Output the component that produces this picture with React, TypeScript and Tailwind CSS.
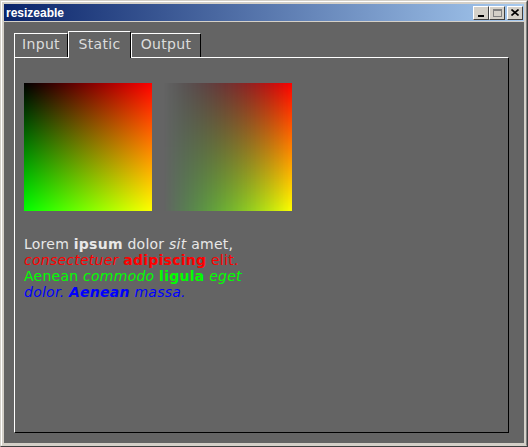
import React from 'react';

const font = { fontFamily: '"DejaVu Sans", sans-serif' };

function TitleButton({ children }: { children: React.ReactNode }) {
  return (
    <div className="w-[16px] h-[14px] bg-[#d4d0c8] border border-t-white border-l-white border-r-[#404040] border-b-[#404040] flex items-center justify-center">
      {children}
    </div>
  );
}

function Tab({ label, width, active }: { label: string; width: string; active?: boolean }) {
  if (active) {
    return (
      <div
        className={`${width} h-[27px] -mb-px relative z-10 bg-[#646464] border-l border-t border-r border-l-white border-t-white border-r-black pt-[4px] text-center text-[14px] leading-[16px] text-[#dcdcdc] tracking-[0.3px]`}
      >
        {label}
      </div>
    );
  }
  return (
    <div
      className={`${width} h-[24px] border-l border-t border-r border-l-white border-t-white border-r-black pt-[2px] text-center text-[14px] leading-[16px] text-[#dcdcdc] tracking-[0.3px]`}
    >
      {label}
    </div>
  );
}

export default function App() {
  return (
    <div className="w-[528px] h-[447px] bg-white">
      <div className="w-[528px] h-[447px] border border-t-[#d4d0c8] border-l-[#d4d0c8] border-r-[#404040] border-b-[#404040]">
        <div className="w-full h-full border border-t-white border-l-white border-r-[#808080] border-b-[#d4d0c8] bg-[#d4d0c8] p-[2px] flex flex-col">
          {/* title bar */}
          <div className="h-[17px] shrink-0 flex items-center justify-between bg-[linear-gradient(to_right,#0a246a,#a6caf0)] pl-[2px] pr-[1px]">
            <span className="text-white font-bold text-[12px] leading-[17px] pt-[1px]" style={{ fontFamily: '"Liberation Sans", Arial, sans-serif' }}>
              resizeable
            </span>
            <div className="flex items-center">
              <TitleButton>
                <div className="w-[6px] h-[2px] bg-black mt-[6px] -ml-[1px]" />
              </TitleButton>
              <TitleButton>
                <div className="w-[9px] h-[8px] border border-[#808080] border-t-2" />
              </TitleButton>
              <div className="w-[2px]" />
              <TitleButton>
                <svg width="8" height="7" viewBox="0 0 8 7">
                  <path d="M0.5 0.5 L7.5 6.5 M7.5 0.5 L0.5 6.5" stroke="black" strokeWidth="1.6" />
                </svg>
              </TitleButton>
            </div>
          </div>
          <div className="h-[1px] shrink-0" />
          {/* content */}
          <div className="flex-1 bg-[#646464] pt-[9px] pl-[10px]" style={font}>
            <div className="flex items-end h-[26px]">
              <Tab label="Input" width="w-[54px]" />
              <Tab label="Static" width="w-[63px]" active />
              <Tab label="Output" width="w-[70px]" />
            </div>
            <div className="w-[495px] h-[376px] border border-t-white border-l-white border-r-black border-b-black pl-[9px] pt-[25px]">
              <div className="flex gap-[12px]">
                <div className="w-[128px] h-[128px] bg-[image:linear-gradient(to_right,#000,#f00),linear-gradient(to_bottom,#000,#0f0)] bg-blend-screen" />
                <div className="w-[128px] h-[128px] [mask-image:linear-gradient(to_right,transparent,black)]">
                  <div className="w-full h-full bg-[image:linear-gradient(to_right,#000,#f00),linear-gradient(to_bottom,#000,#0f0)] bg-blend-screen" />
                </div>
              </div>
              <div className="mt-[25px] text-[14px] leading-[16px] tracking-[0.25px]">
                <div className="text-[#e8e8e8]">
                  Lorem <b>ipsum</b> dolor <i>sit</i> amet,
                </div>
                <div className="text-[#ff0000]">
                  <i>consectetuer</i> <b>adipiscing</b> elit.
                </div>
                <div className="text-[#00ff00]">
                  Aenean <i>commodo</i> <b>ligula</b> <i>eget</i>
                </div>
                <div className="text-[#0000ff]">
                  <i>dolor.</i> <b><i>Aenean</i></b> <i>massa.</i>
                </div>
              </div>
            </div>
          </div>
        </div>
      </div>
    </div>
  );
}
